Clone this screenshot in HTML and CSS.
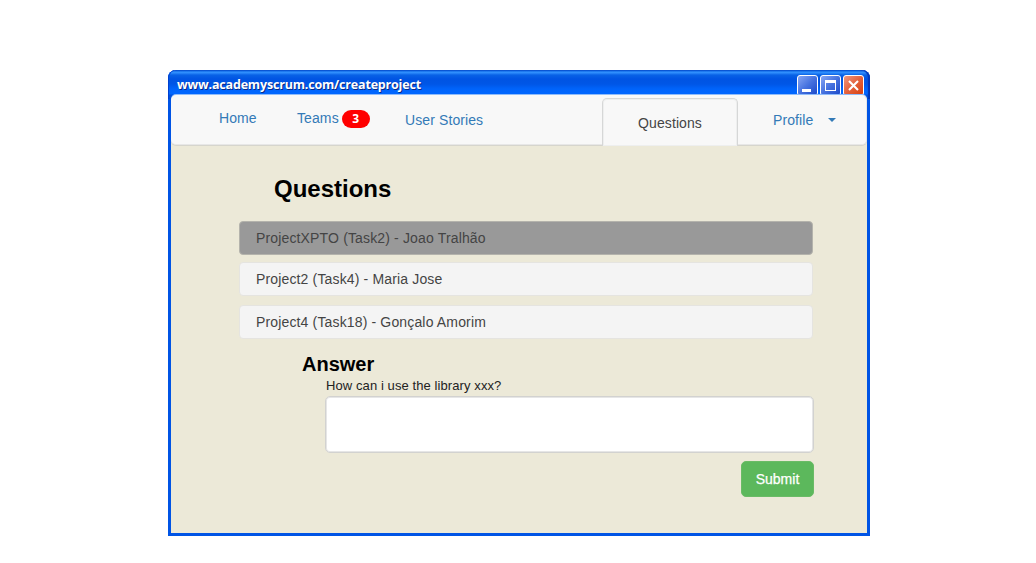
FILE: index.html
```html
<!DOCTYPE html>
<html lang="en">
<head>
<meta charset="utf-8">
<title>Academy Scrum</title>
<link rel="stylesheet" href="styles.css">
</head>
<body>
<main class="window">
  <header class="titlebar">
    <span class="address">www.academyscrum.com/createproject</span>
    <div class="controls">
      <svg class="control" viewBox="0 0 21 21"><defs><linearGradient id="blue" x1="0" y1="0" x2="1" y2="1"><stop offset="0" stop-color="#8aa9f5"/><stop offset=".5" stop-color="#4672df"/><stop offset="1" stop-color="#1846c8"/></linearGradient></defs><rect x=".5" y=".5" width="20" height="20" rx="2.5" fill="url(#blue)" stroke="#fff"/><path d="M5 14h9v3H5z" fill="#fff"/></svg>
      <svg class="control" viewBox="0 0 21 21"><rect x=".5" y=".5" width="20" height="20" rx="2.5" fill="url(#blue)" stroke="#fff"/><path d="M5 5h11v11H5zM6 8v7h9V8z" fill="#fff" fill-rule="evenodd"/></svg>
      <svg class="control" viewBox="0 0 21 21"><defs><linearGradient id="red" x1="0" y1="0" x2="1" y2="1"><stop offset="0" stop-color="#f09a82"/><stop offset=".5" stop-color="#e3613c"/><stop offset="1" stop-color="#d83c08"/></linearGradient></defs><rect x=".5" y=".5" width="20" height="20" rx="2.5" fill="url(#red)" stroke="#fff"/><path d="M6 6l9 9M15 6l-9 9" stroke="#fff" stroke-width="2.1"/></svg>
    </div>
  </header>
  <nav class="nav">
    <a class="link home">Home</a>
    <a class="link teams">Teams<span class="badge">3</span></a>
    <a class="link stories">User Stories</a>
    <a class="tab">Questions</a>
    <a class="link profile">Profile<span class="caret"></span></a>
  </nav>
  <section class="content">
    <h1 class="title">Questions</h1>
    <ul class="questions">
      <li class="question selected">ProjectXPTO (Task2) - Joao Tralhão</li>
      <li class="question">Project2 (Task4) - Maria Jose</li>
      <li class="question">Project4 (Task18) - Gonçalo Amorim</li>
    </ul>
    <h2 class="subtitle">Answer</h2>
    <form class="answer">
      <label class="prompt" for="reply">How can i use the library xxx?</label>
      <textarea class="reply" id="reply"></textarea>
      <button class="submit" type="button">Submit</button>
    </form>
  </section>
</main>
</body>
</html>
```

FILE: styles.css
```css
* { box-sizing: border-box; }
body {
  margin: 0;
  padding: 70px 0 0 168px;
  background: #fff;
  font-family: "Liberation Sans", Arial, sans-serif;
}
.window {
  display: flex;
  flex-direction: column;
  width: 702px;
  height: 466px;
  border: solid #0054e5;
  border-width: 0 3px 3px;
  border-radius: 8px 8px 0 0;
  background: #ece9d8;
}
.titlebar {
  display: flex;
  flex: none;
  justify-content: space-between;
  height: 29px;
  margin: 0 -3px;
  padding: 5px 6px 0 9px;
  border-radius: 8px 8px 0 0;
  background: linear-gradient(#0a54d0 0, #0a5fe0 1px, #3394ff 2px, #2a88fa 3px, #0862e6 5px, #0054e3 9px, #0056e6 14px, #0064fb 19px, #0066ff 24px, #0050dc 25px);
  box-shadow: inset 1px 0 #0040d0, inset -2px 0 1px #0035b8;
}
.address {
  color: #fff;
  font: bold 12.5px/19px "Open Sans", sans-serif;
  letter-spacing: -0.18px;
  text-shadow: 1px 1px #0a2a86;
}
.controls { display: flex; gap: 2px; }
.control { width: 21px; height: 21px; }
.nav {
  display: flex;
  flex: none;
  position: relative;
  align-items: flex-start;
  height: 50px;
  margin-top: -4px;
  padding-left: 48px;
  border: 1px solid #e7e7e7;
  border-width: 0 1px 1px 0;
  border-radius: 5px;
  background: #f8f8f8;
  box-shadow: 0 -1px #8fbcfa, 0 1px #d6d5cd;
}
.link {
  display: flex;
  align-items: center;
  color: #337ab7;
  font-size: 14px;
  letter-spacing: 0.1px;
  line-height: 18px;
}
.home { width: 78px; margin-top: 14px; }
.teams { align-items: flex-start; width: 108px; margin-top: 14px; }
.stories { width: 197px; margin-top: 16px; }
.badge {
  width: 28px;
  height: 18px;
  margin: 1px 0 0 3px;
  border-radius: 9px;
  background: #f00;
  color: #fff;
  font: bold 12px/18px "Open Sans", sans-serif;
  text-align: center;
}
.tab {
  width: 136px;
  height: 48px;
  margin-top: 3px;
  border: 1px solid #d6d7d7;
  border-bottom: 0;
  border-radius: 5px 5px 0 0;
  background: #f8f8f8;
  box-shadow: inset 0 0 0 1px #eeefef;
  color: #444;
  font-size: 14px;
  letter-spacing: 0.1px;
  line-height: 48px;
  text-align: center;
}
.profile { margin: 16px 0 0 35px; }
.caret {
  margin-left: 15px;
  border: solid transparent;
  border-width: 4px 4px 0;
  border-top-color: #337ab7;
}
.content { padding: 29px 54px 0 68px; }
.title {
  margin: 0 0 17px 35px;
  font-size: 24px;
  line-height: 30px;
}
.questions { margin: 0; padding: 0; list-style: none; }
.question {
  height: 34px;
  padding-left: 16px;
  border: 1px solid #e5e4e0;
  border-radius: 4px;
  background: #f4f4f4;
  color: #444;
  font-size: 14px;
  letter-spacing: 0.15px;
  line-height: 32px;
}
.question + .question { margin-top: 7px; }
.question:last-child { margin-top: 9px; }
.question.selected { border-color: #b4b3ac; background: #999; }
.subtitle {
  margin: 13px 0 0 63px;
  font-size: 20px;
  line-height: 24px;
}
.answer {
  display: flex;
  flex-direction: column;
  margin: 0 -1px 0 86px;
}
.prompt {
  padding: 1px 0 0 1px;
  color: #222;
  font-size: 13px;
  letter-spacing: 0.09px;
  line-height: 18px;
}
.reply {
  height: 57px;
  margin: 1px 0 8px;
  border: 1px solid #d2d2d0;
  border-radius: 5px;
  background: #fff;
  box-shadow: inset 0 0 0 1px #e6e6e6;
  resize: none;
}
.submit {
  align-self: flex-end;
  width: 73px;
  height: 36px;
  padding: 0;
  border: 1px solid #6abb66;
  border-radius: 5px;
  background: #5cb85c;
  color: #fff;
  font: 14px "Liberation Sans", Arial, sans-serif;
  -webkit-text-stroke: 0.25px #fff;
}
```
